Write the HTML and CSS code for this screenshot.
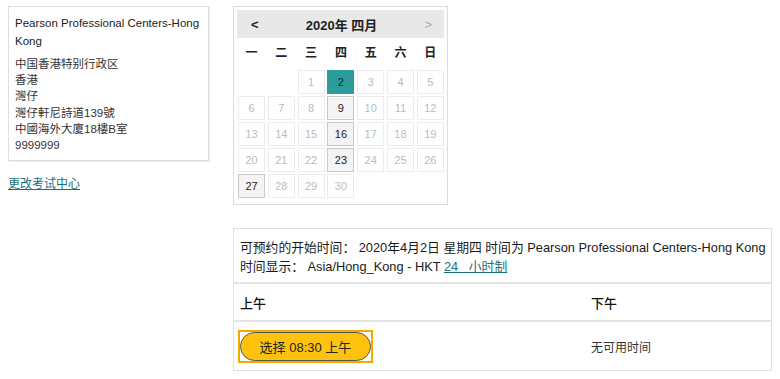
FILE: index.html
```html
<!DOCTYPE html>
<html lang="zh">

<head>
    <meta charset="UTF-8">
    <title>选择预约时间</title>
    <link rel="stylesheet" href="styles.css">
</head>

<body>
    <div class="page">
        <div class="side">
            <div class="address-card">
                <div class="center-name">Pearson Professional Centers-Hong Kong</div>
                <div class="address-lines">
                    中国香港特别行政区<br>
                    香港<br>
                    灣仔<br>
                    灣仔軒尼詩道139號<br>
                    中國海外大廈18樓B室<br>
                    9999999
                </div>
            </div>
            <a href="#" class="change-link">更改考试中心</a>
        </div>

        <div class="main">
            <div class="calendar">
                <div class="cal-head">
                    <span class="cal-nav">&lt;</span>
                    <span class="cal-title">2020年 四月</span>
                    <span class="cal-nav disabled">&gt;</span>
                </div>
                <div class="cal-grid">
                    <div class="dow">一</div>
                    <div class="dow">二</div>
                    <div class="dow">三</div>
                    <div class="dow">四</div>
                    <div class="dow">五</div>
                    <div class="dow">六</div>
                    <div class="dow">日</div>

                    <div class="day empty"></div>
                    <div class="day empty"></div>
                    <div class="day off">1</div>
                    <div class="day selected">2</div>
                    <div class="day off">3</div>
                    <div class="day off">4</div>
                    <div class="day off">5</div>

                    <div class="day off">6</div>
                    <div class="day off">7</div>
                    <div class="day off">8</div>
                    <div class="day open">9</div>
                    <div class="day off">10</div>
                    <div class="day off">11</div>
                    <div class="day off">12</div>

                    <div class="day off">13</div>
                    <div class="day off">14</div>
                    <div class="day off">15</div>
                    <div class="day open">16</div>
                    <div class="day off">17</div>
                    <div class="day off">18</div>
                    <div class="day off">19</div>

                    <div class="day off">20</div>
                    <div class="day off">21</div>
                    <div class="day off">22</div>
                    <div class="day open">23</div>
                    <div class="day off">24</div>
                    <div class="day off">25</div>
                    <div class="day off">26</div>

                    <div class="day open">27</div>
                    <div class="day off">28</div>
                    <div class="day off">29</div>
                    <div class="day off">30</div>
                </div>
            </div>

            <div class="times">
                <div class="times-info">
                    可预约的开始时间： 2020年4月2日 星期四 时间为 Pearson Professional Centers-Hong Kong<br>
                    时间显示： Asia/Hong_Kong - HKT <a href="#" class="format-link">24&nbsp;&nbsp;&nbsp;小时制</a>
                </div>
                <div class="times-row head">
                    <div>上午</div>
                    <div>下午</div>
                </div>
                <div class="times-row">
                    <div>
                        <span class="slot-focus"><button class="slot-btn">选择 08:30 上午</button></span>
                    </div>
                    <div class="none">无可用时间</div>
                </div>
            </div>
        </div>
    </div>
</body>

</html>
```

FILE: styles.css
```css
* {
    margin: 0;
    padding: 0;
    box-sizing: border-box;
}

body {
    font-family: 'Liberation Sans', 'Noto Sans CJK SC', sans-serif;
    font-size: 12px;
    color: #222;
    background: #fff;
}

.page {
    display: flex;
    align-items: flex-start;
    gap: 24px;
    padding: 6px 8px;
}

.side {
    width: 201px;
    flex-shrink: 0;
}

.address-card {
    border: 1px solid #dedede;
    box-shadow: 1px 1px 0 #ececec;
    height: 155px;
    padding: 7px 5px 6px 6px;
    font-size: 11.5px;
}

.center-name {
    line-height: 18px;
    margin-bottom: 6px;
}

.address-lines {
    line-height: 16.2px;
    color: #333;
}

.change-link {
    display: inline-block;
    margin-top: 13px;
    color: #1b7079;
    font-size: 12px;
    text-decoration: underline;
}

.main {
    width: 541px;
}

/* calendar */

.calendar {
    width: 215px;
    border: 1px solid #dcdcdc;
    padding: 3px 3px 6px;
}

.cal-head {
    display: flex;
    align-items: center;
    justify-content: space-between;
    height: 28px;
    background: #e8e8e8;
    padding: 0 12px 0 14px;
}

.cal-nav {
    font-weight: bold;
    font-size: 13px;
    color: #222;
}

.cal-nav.disabled {
    color: #aaa;
    font-weight: normal;
}

.cal-title {
    font-size: 13px;
    font-weight: bold;
}

.cal-grid {
    display: grid;
    grid-template-columns: repeat(7, 27px);
    column-gap: 2.8px;
    row-gap: 2px;
    padding: 0 0 0 1px;
}

.dow {
    height: 30px;
    line-height: 30px;
    text-align: center;
    font-weight: bold;
    font-size: 12px;
}

.day {
    height: 24px;
    line-height: 22px;
    text-align: center;
    font-size: 11px;
    border: 1px solid #ececec;
    color: #bbb;
}

.day.empty {
    border: none;
}

.day.open {
    background: #f4f4f4;
    border-color: #c8c8c8;
    color: #222;
}

.day.selected {
    background: #2a9d9b;
    border-color: #2a9d9b;
    color: #123;
}

/* time slots */

.times {
    margin-top: 23px;
    border: 1px solid #e0e0e0;
}

.times-info {
    font-size: 12.8px;
    line-height: 19px;
    padding: 9px 2px 6px 6px;
    border-bottom: 2px solid #e4e4e4;
    color: #1a1a1a;
    white-space: nowrap;
}

.format-link {
    color: #1b7079;
    text-decoration: underline;
}

.times-row {
    display: grid;
    grid-template-columns: 351px 1fr;
    align-items: center;
    padding: 0 4px;
    height: 48px;
    font-size: 13px;
}

.times-row.head {
    height: 38px;
    padding: 0 6px;
    border-bottom: 2px solid #e4e4e4;
    font-size: 13px;
    font-weight: 500;
    color: #111;
}

.times-row .none {
    color: #333;
    font-size: 12px;
    padding-left: 2px;
}

.slot-focus {
    display: inline-block;
    border: 2px solid #f5a800;
    line-height: 0;
}

.slot-btn {
    width: 131px;
    height: 29px;
    border-radius: 15px;
    border: 1px solid #555;
    background: #ffc20e;
    font-family: inherit;
    font-size: 13px;
    line-height: normal;
    color: #222;
    cursor: pointer;
}
```
